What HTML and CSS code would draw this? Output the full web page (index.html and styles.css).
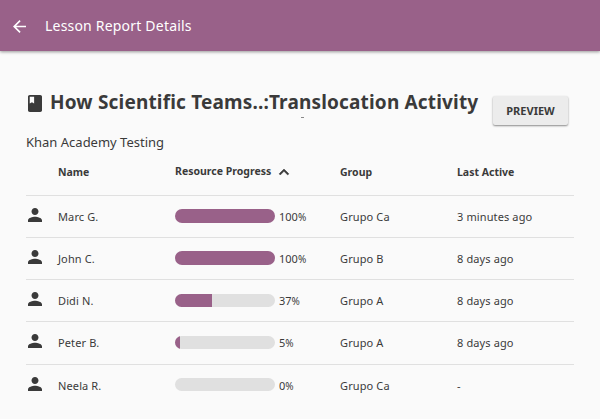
FILE: index.html
```html
<!DOCTYPE html>
<html lang="en">
<head>
<meta charset="utf-8">
<title>Lesson Report Details</title>
<link rel="stylesheet" href="styles.css">
</head>
<body>
<svg class="defs" width="0" height="0"><symbol id="person" viewBox="4 4 16 16"><path d="M12 12c2.210 0 4-1.790 4-4s-1.790-4-4-4-4 1.790-4 4 1.790 4 4 4zm0 2c-2.670 0-8 1.340-8 4v2h16v-2c0-2.660-5.330-4-8-4z"/></symbol></svg>
<header class="appbar">
  <svg class="back" viewBox="4 4 16 16"><path d="M20 11H7.830l5.590-5.590L12 4l-8 8 8 8 1.410-1.410L7.830 13H20v-2z"/></svg>
  <span class="appbar-title">Lesson Report Details</span>
</header>
<main class="content">
  <div class="heading">
    <svg class="book" viewBox="4 2 16 20" preserveAspectRatio="none"><path d="M18 2H6c-1.100 0-2 .9-2 2v16c0 1.100.9 2 2 2h12c1.100 0 2-.9 2-2V4c0-1.100-.9-2-2-2zM6 4h5v8l-2.500-1.500L6 12V4z"/></svg>
    <h1 class="title">How Scientific Teams..:Translocation Activity<span class="mark"></span></h1>
    <button class="preview">PREVIEW</button>
  </div>
  <p class="class-name">Khan Academy Testing</p>
  <div class="table">
    <div class="row head">
      <span></span><span>Name</span>
      <span class="sort">Resource Progress<svg class="chevron" viewBox="6 8 12 7.400"><path d="M12 8l-6 6 1.410 1.410L12 10.830l4.590 4.580L18 14z"/></svg></span>
      <span>Group</span><span>Last Active</span>
    </div>
    <div class="row"><svg class="person"><use href="#person"/></svg><span>Marc G.</span><div class="progress"><div class="bar"><div class="fill" style="width:100%"></div></div><span>100<small>%</small></span></div><span>Grupo Ca</span><span>3 minutes ago</span></div>
    <div class="row"><svg class="person"><use href="#person"/></svg><span>John C.</span><div class="progress"><div class="bar"><div class="fill" style="width:100%"></div></div><span>100<small>%</small></span></div><span>Grupo B</span><span>8 days ago</span></div>
    <div class="row"><svg class="person"><use href="#person"/></svg><span>Didi N.</span><div class="progress"><div class="bar"><div class="fill" style="width:37%"></div></div><span>37<small>%</small></span></div><span>Grupo A</span><span>8 days ago</span></div>
    <div class="row"><svg class="person"><use href="#person"/></svg><span>Peter B.</span><div class="progress"><div class="bar"><div class="fill" style="width:5%"></div></div><span>5<small>%</small></span></div><span>Grupo A</span><span>8 days ago</span></div>
    <div class="row"><svg class="person"><use href="#person"/></svg><span>Neela R.</span><div class="progress"><div class="bar"><div class="fill" style="width:0%"></div></div><span>0<small>%</small></span></div><span>Grupo Ca</span><span>-</span></div>
  </div>
</main>
</body>
</html>
```
FILE: styles.css
```css
* { box-sizing: border-box; }
body {
  margin: 0;
  height: 419px;
  overflow: hidden;
  background: #fafafa;
  color: #3a3a3a;
  font-family: "Noto Sans", sans-serif;
}
svg { display: block; fill: currentColor; }
.defs { position: absolute; }
.appbar {
  display: flex;
  align-items: center;
  height: 51px;
  padding-left: 13px;
  background: #996189;
  color: #fff;
  box-shadow: 0 1px 3px rgba(0, 0, 0, .4);
}
.back { width: 13px; height: 13px; margin-top: 1px; }
.appbar-title { margin-left: 19px; font-size: 14px; line-height: 20px; letter-spacing: .2px; }
.content { padding: 37px 26px 0; }
.heading { display: flex; height: 38px; }
.book { width: 14px; height: 17px; margin: 7px 0 0 2px; }
.title {
  position: relative;
  width: 443px;
  margin: 0 0 0 8px;
  font-size: 19px;
  line-height: 28px;
  font-weight: 700;
  letter-spacing: .17px;
  white-space: nowrap;
}
.mark { position: absolute; left: 251px; top: 29px; width: 3px; height: 1px; background: #888; }
.preview {
  width: 75px;
  height: 29px;
  margin-top: 8px;
  padding: 0;
  border: 0;
  border-radius: 2px;
  background: #ececec;
  color: #3a3a3a;
  font: 700 11px/29px "Noto Sans", sans-serif;
  box-shadow: 0 1px 2px rgba(0, 0, 0, .45);
}
.class-name { margin: 6px 0 1px; font-size: 13px; line-height: 20px; }
.row {
  display: grid;
  grid-template-columns: 32px 117px 165px 117px 1fr;
  align-items: center;
  height: 42.150px;
  border-top: 1px solid #e0e0e0;
  font-size: 11px;
  line-height: 16px;
  letter-spacing: .12px;
}
.row > span { padding-top: 1px; }
.head { height: 42px; border: 0; padding-bottom: 6px; font-size: 10.500px; font-weight: 700; letter-spacing: 0; }
.head > .sort { display: flex; align-items: center; padding-top: 0; }
.head > .sort { margin-top: -1px; }
.chevron { width: 10px; height: 6px; margin: 2px 0 0 8px; stroke: currentColor; stroke-width: .6; overflow: visible; }
.person { width: 14px; height: 14px; margin: -3px 0 0 2px; }
.progress { display: flex; align-items: center; margin-top: -1px; letter-spacing: 0; }
.progress > span { margin-left: 4px; padding-top: 2px; }
.progress small { font-size: 10px; }
.bar { width: 100px; height: 13.500px; overflow: hidden; border-radius: 7px; background: #e0e0e0; }
.fill { height: 100%; background: #996189; }
```
